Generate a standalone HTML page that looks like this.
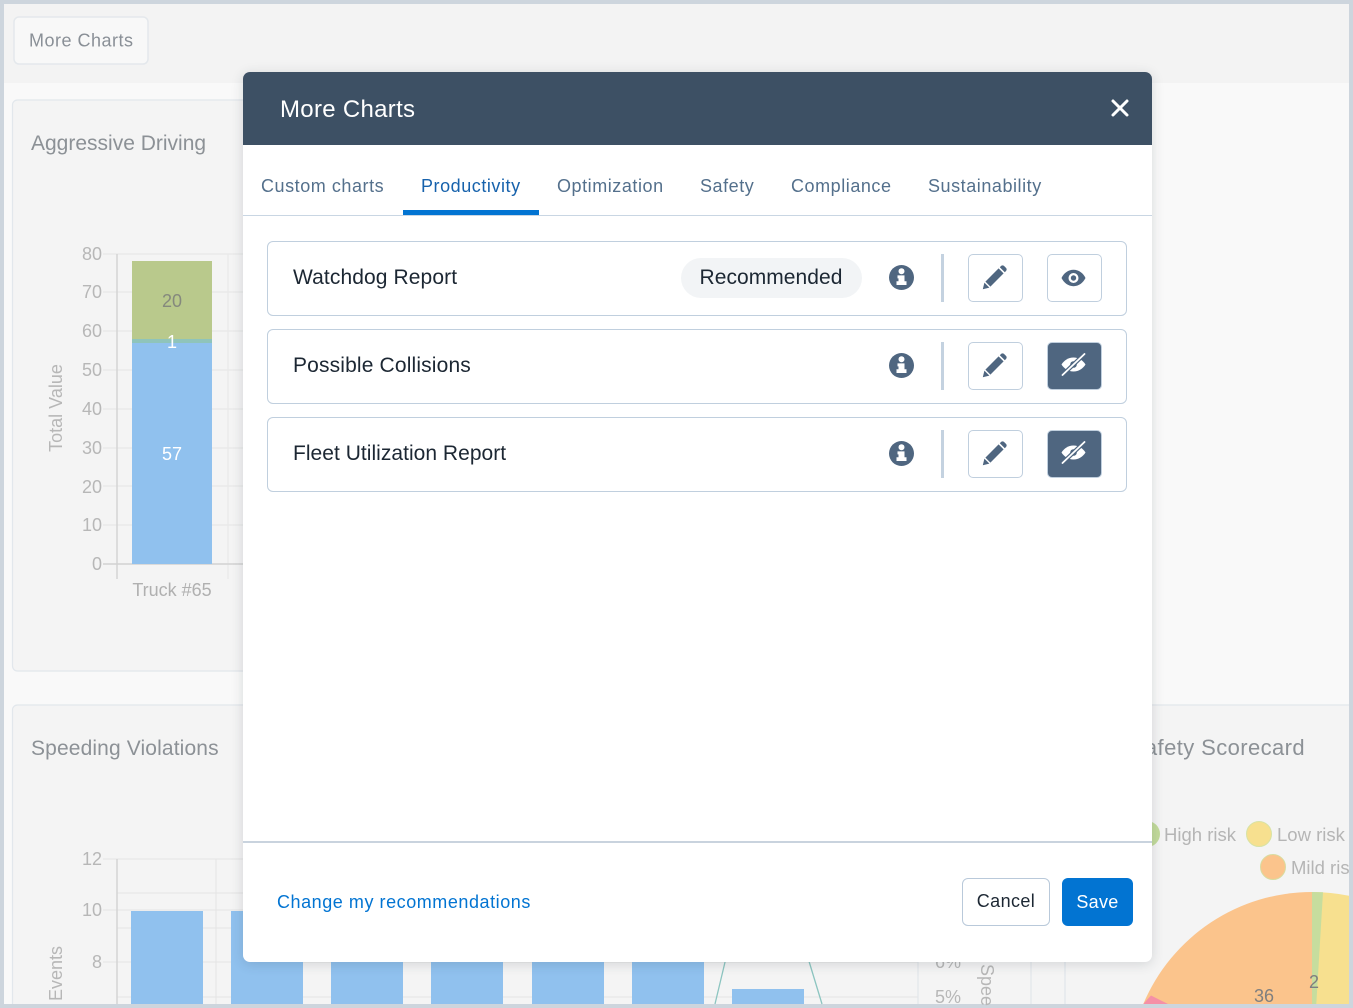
<!DOCTYPE html>
<html lang="en"><head><meta charset="utf-8"><title>More Charts</title>
<style>
*{box-sizing:border-box}
html,body{margin:0;padding:0;width:1353px;height:1008px;overflow:hidden;background:#cdd5dd;font-family:"Liberation Sans",sans-serif}
#wrap{position:absolute;left:0;top:0;width:1353px;height:1008px;overflow:hidden;filter:blur(.35px)}
#bg{position:absolute;left:0;top:0}
.a{position:absolute;white-space:nowrap}
#modal{position:absolute;left:243px;top:72px;width:908.500px;height:890px;background:#fff;border-radius:7px;box-shadow:0 2px 12px rgba(40,50,60,.16)}
#head{position:absolute;left:0;top:0;width:100%;height:73px;background:#3d5064;border-radius:7px 7px 0 0}
#title{left:37px;top:23px;font-size:24px;line-height:29px;color:#fff;letter-spacing:.3px}
.tab{top:103px;font-size:18px;line-height:22px;color:#54708c;letter-spacing:.55px}
.row{position:absolute;left:24px;width:860px;height:75px;border:1.500px solid #c0cfde;border-radius:6px;background:#fff}
.name{left:25px;top:23px;font-size:21px;line-height:26px;color:#1c2733}
.div{position:absolute;left:672.500px;top:12px;width:3px;height:48px;background:#c4d2e0}
.btn{position:absolute;top:12px;width:55px;height:48px;border:1.500px solid #c0cfde;border-radius:5px;background:#fff}
.btn.d{background:#4f6680}
.btn svg,.info{position:absolute}
.info{left:620.500px;top:23.500px}
</style></head><body>
<div id="wrap">
<svg id="bg" width="1353" height="1008" viewBox="0 0 1353 1008" font-family="Liberation Sans, sans-serif">
<rect x="4" y="4" width="1345" height="1000" fill="#f9f9f9"/>
<rect x="4" y="4" width="1345" height="79" fill="#f3f3f3"/>
<rect x="14" y="17" width="134" height="47" rx="5" fill="#f8f8f8" stroke="#e4e8ec" stroke-width="1.500"/>
<text x="29" y="46.500" font-size="18" fill="#8a9097" letter-spacing=".5">More Charts</text>
<rect x="12.500" y="100" width="400" height="571" rx="5" fill="#f4f4f4" stroke="#e2e7ec" stroke-width="1.200"/>
<text x="31" y="150" font-size="21" fill="#8c9196">Aggressive Driving</text>
<g stroke="#e8e8e8" stroke-width="1.200">
<path d="M103 254H400M103 292H400M103 331H400M103 370H400M103 409H400M103 448H400M103 486H400M103 525H400M228 254V579"/>
</g>
<path d="M117 254V579M103 564H400" stroke="#d2d2d2" stroke-width="1.400" fill="none"/>
<rect x="132" y="261" width="80" height="78" fill="#b9c98c"/>
<rect x="132" y="339" width="80" height="4" fill="#8fc4ba"/>
<rect x="132" y="343" width="80" height="221" fill="#90c1ee"/>
<g font-size="18" fill="#b7b7b7" text-anchor="end">
<text x="102" y="260">80</text><text x="102" y="298">70</text><text x="102" y="337">60</text><text x="102" y="376">50</text><text x="102" y="415">40</text><text x="102" y="454">30</text><text x="102" y="493">20</text><text x="102" y="531">10</text><text x="102" y="570">0</text>
</g>
<text x="172" y="596" font-size="18" fill="#b0b0b0" text-anchor="middle">Truck #65</text>
<text transform="translate(62 408) rotate(-90)" font-size="18" fill="#b7b7b7" text-anchor="middle">Total Value</text>
<text x="172" y="307" font-size="18" fill="#85897d" text-anchor="middle">20</text>
<text x="172" y="348" font-size="18" fill="#fff" text-anchor="middle">1</text>
<text x="172" y="460" font-size="18" fill="#fff" text-anchor="middle">57</text>

<path d="M12.500 1004V710A5 5 0 0 1 17.500 705H1349V1004Z" fill="#f4f4f4"/>
<path d="M12.500 1004V710A5 5 0 0 1 17.500 705H1349" fill="none" stroke="#e2e7ec" stroke-width="1.200"/>
<text x="31" y="755" font-size="21" fill="#8c9196" letter-spacing=".13">Speeding Violations</text>
<text x="1305" y="755" font-size="22" fill="#8c9196" text-anchor="end" letter-spacing=".4">Safety Scorecard</text>
<path d="M103 859H918M117 893H918M103 910H918M117 928H918M103 962H918M117 997H918M216 859V1004" stroke="#e6e6e6" stroke-width="1.200" fill="none"/>
<path d="M117 859V1004" stroke="#d2d2d2" stroke-width="1.400"/>
<path d="M918 950V1004M1031 950V1004" stroke="#e2e6ea" stroke-width="1.200"/>
<path d="M1065 950V1004" stroke="#e2e7ec" stroke-width="1.400"/>
<g fill="#90c1ee"><rect x="131" y="911" width="72" height="93"/><rect x="231" y="911" width="72" height="93"/><rect x="331" y="911" width="72" height="93"/><rect x="431" y="911" width="72" height="93"/><rect x="532" y="911" width="72" height="93"/><rect x="632" y="911" width="72" height="93"/><rect x="732" y="989" width="72" height="15"/></g>
<path d="M726 958L715 1004M808 958L822 1004" stroke="#8cc5c0" stroke-width="1.300" fill="none"/>
<g font-size="18" fill="#b7b7b7" text-anchor="end"><text x="102" y="865">12</text><text x="102" y="916">10</text><text x="102" y="968">8</text><text x="961" y="968">6%</text><text x="961" y="1003">5%</text></g>
<text transform="translate(62 1001) rotate(-90)" font-size="18" fill="#b7b7b7">Events</text>
<text transform="translate(981 964) rotate(90)" font-size="18" fill="#b7b7b7">Spee</text>

<circle cx="1147" cy="834" r="13" fill="#c3db9b"/>
<circle cx="1259" cy="834" r="12.500" fill="#f7e08f" stroke="#d8e3a4"/>
<circle cx="1273" cy="867" r="12.500" fill="#fbc48c" stroke="#d8dca0"/>
<g font-size="18.500" fill="#b5b5b5"><text x="1164" y="841">High risk</text><text x="1277" y="841">Low risk</text><text x="1291" y="874">Mild ris</text></g>
<path d="M1312 892A183 183 0 0 0 1143.300 1004H1312Z" fill="#fbc48c"/>
<path d="M1312 892A183 183 0 0 1 1349 895.800V1004H1312Z" fill="#f7e08f"/>
<path d="M1312 892A183 183 0 0 1 1323 892.300L1316.300 1004H1312Z" fill="#c6dd9e"/>
<path d="M1151 995.500L1168 1004H1143.300A183 183 0 0 1 1151 995.500Z" fill="#f590a6"/>
<text x="1264" y="1002" font-size="18" fill="#7f7f7f" text-anchor="middle">36</text>
<text x="1314" y="988" font-size="18" fill="#7f7f7f" text-anchor="middle">2</text>
</svg>

<div id="modal">
<div id="head"><span class="a" id="title">More Charts</span>
<svg class="a" style="left:867px;top:26px" width="20" height="20" viewBox="0 0 20 20"><path d="M3 3L17 17M17 3L3 17" stroke="#fff" stroke-width="3" stroke-linecap="round"/></svg></div>
<div class="a" style="left:0;top:142.500px;width:100%;height:1.500px;background:#c9d6e3"></div>
<span class="a tab" style="left:18px">Custom charts</span>
<span class="a tab" style="left:178px;color:#1762ac">Productivity</span>
<span class="a tab" style="left:314px">Optimization</span>
<span class="a tab" style="left:457px">Safety</span>
<span class="a tab" style="left:548px">Compliance</span>
<span class="a tab" style="left:685px">Sustainability</span>
<div class="a" style="left:160px;top:138px;width:136px;height:5px;background:#0274d2"></div>

<div class="row" style="top:168.500px"><span class="a name" style="letter-spacing:.1px">Watchdog Report</span>
<div class="a" style="left:412.500px;top:16.500px;width:181px;height:40px;border-radius:20px;background:#f2f4f6"></div>
<span class="a" style="left:431.500px;top:23px;font-size:21px;line-height:26px;color:#1c2733;letter-spacing:.05px">Recommended</span>
<svg class="info" width="25" height="25" viewBox="0 0 25 25"><circle cx="12.500" cy="12.500" r="12.500" fill="#4f6680"/><circle cx="12.500" cy="6.300" r="3" fill="#fff"/><path fill="#fff" d="M8.500 10.400H15.500V16.200H17.500V20H7.500V16.200H9.500V13.400H8.500Z"/></svg>
<div class="div"></div>
<div class="btn" style="left:699.500px"><svg style="left:13.500px;top:10px" width="25" height="25" viewBox="0 0 25 25"><path fill="#4f6680" d="M.8 24.200L2.400 17.600L7.400 22.600ZM3.400 16.600L16.600 3.400L21.600 8.400L8.400 21.600ZM17.800 2.200L19 1C19.900 .1 21.200 .1 22.100 1L24 2.900C24.900 3.800 24.900 5.100 24 6L22.800 7.200Z"/></svg></div>
<div class="btn" style="left:778.500px"><svg style="left:13.500px;top:14px" width="25" height="18" viewBox="0 0 25 18"><path fill="#4f6680" d="M.5 9C3 4 7.300 .8 12.500 .8S22 4 24.500 9C22 14 17.700 17.200 12.500 17.200S3 14 .5 9z"/><circle cx="12.500" cy="9" r="5" fill="#fff"/><circle cx="12.500" cy="9" r="2.700" fill="#4f6680"/></svg></div>
</div>

<div class="row" style="top:256.500px"><span class="a name" style="letter-spacing:.15px">Possible Collisions</span>
<svg class="info" width="25" height="25" viewBox="0 0 25 25"><circle cx="12.500" cy="12.500" r="12.500" fill="#4f6680"/><circle cx="12.500" cy="6.300" r="3" fill="#fff"/><path fill="#fff" d="M8.500 10.400H15.500V16.200H17.500V20H7.500V16.200H9.500V13.400H8.500Z"/></svg>
<div class="div"></div>
<div class="btn" style="left:699.500px"><svg style="left:13.500px;top:10px" width="25" height="25" viewBox="0 0 25 25"><path fill="#4f6680" d="M.8 24.200L2.400 17.600L7.400 22.600ZM3.400 16.600L16.600 3.400L21.600 8.400L8.400 21.600ZM17.800 2.200L19 1C19.900 .1 21.200 .1 22.100 1L24 2.900C24.900 3.800 24.900 5.100 24 6L22.800 7.200Z"/></svg></div>
<div class="btn d" style="left:778.500px"><svg style="left:13.500px;top:10px" width="25" height="26" viewBox="0 0 25 26"><path fill="#fff" d="M.5 11.500C3 7.500 7.300 4.500 12.500 4.500S22 7.500 24.500 11.500C22 15.500 17.700 18.500 12.500 18.500S3 15.500 .5 11.500z"/><circle cx="12.500" cy="11.500" r="3.300" fill="#4f6680"/><path d="M23.500 1L1.500 22" stroke="#4f6680" stroke-width="4.200"/><path d="M23.500 1L1.500 22" stroke="#fff" stroke-width="1.800" stroke-linecap="round"/></svg></div>
</div>

<div class="row" style="top:344.500px"><span class="a name" style="letter-spacing:.03px">Fleet Utilization Report</span>
<svg class="info" width="25" height="25" viewBox="0 0 25 25"><circle cx="12.500" cy="12.500" r="12.500" fill="#4f6680"/><circle cx="12.500" cy="6.300" r="3" fill="#fff"/><path fill="#fff" d="M8.500 10.400H15.500V16.200H17.500V20H7.500V16.200H9.500V13.400H8.500Z"/></svg>
<div class="div"></div>
<div class="btn" style="left:699.500px"><svg style="left:13.500px;top:10px" width="25" height="25" viewBox="0 0 25 25"><path fill="#4f6680" d="M.8 24.200L2.400 17.600L7.400 22.600ZM3.400 16.600L16.600 3.400L21.600 8.400L8.400 21.600ZM17.800 2.200L19 1C19.900 .1 21.200 .1 22.100 1L24 2.900C24.900 3.800 24.900 5.100 24 6L22.800 7.200Z"/></svg></div>
<div class="btn d" style="left:778.500px"><svg style="left:13.500px;top:10px" width="25" height="26" viewBox="0 0 25 26"><path fill="#fff" d="M.5 11.500C3 7.500 7.300 4.500 12.500 4.500S22 7.500 24.500 11.500C22 15.500 17.700 18.500 12.500 18.500S3 15.500 .5 11.500z"/><circle cx="12.500" cy="11.500" r="3.300" fill="#4f6680"/><path d="M23.500 1L1.500 22" stroke="#4f6680" stroke-width="4.200"/><path d="M23.500 1L1.500 22" stroke="#fff" stroke-width="1.800" stroke-linecap="round"/></svg></div>
</div>

<div class="a" style="left:0;top:769px;width:100%;height:1.500px;background:#c9d3de"></div>
<span class="a" style="left:34px;top:819px;font-size:18px;line-height:22px;color:#0274d2;letter-spacing:.55px">Change my recommendations</span>
<div class="a" style="left:719px;top:806px;width:88px;height:48px;border:1.500px solid #b9c9da;border-radius:6px;background:#fff;color:#1c2733;font-size:18px;line-height:45px;text-align:center;letter-spacing:.4px">Cancel</div>
<div class="a" style="left:819px;top:806px;width:71px;height:48px;border-radius:6px;background:#0274d2;color:#fff;font-size:18px;line-height:48px;text-align:center;letter-spacing:.3px">Save</div>
</div>
</div>
</body></html>
